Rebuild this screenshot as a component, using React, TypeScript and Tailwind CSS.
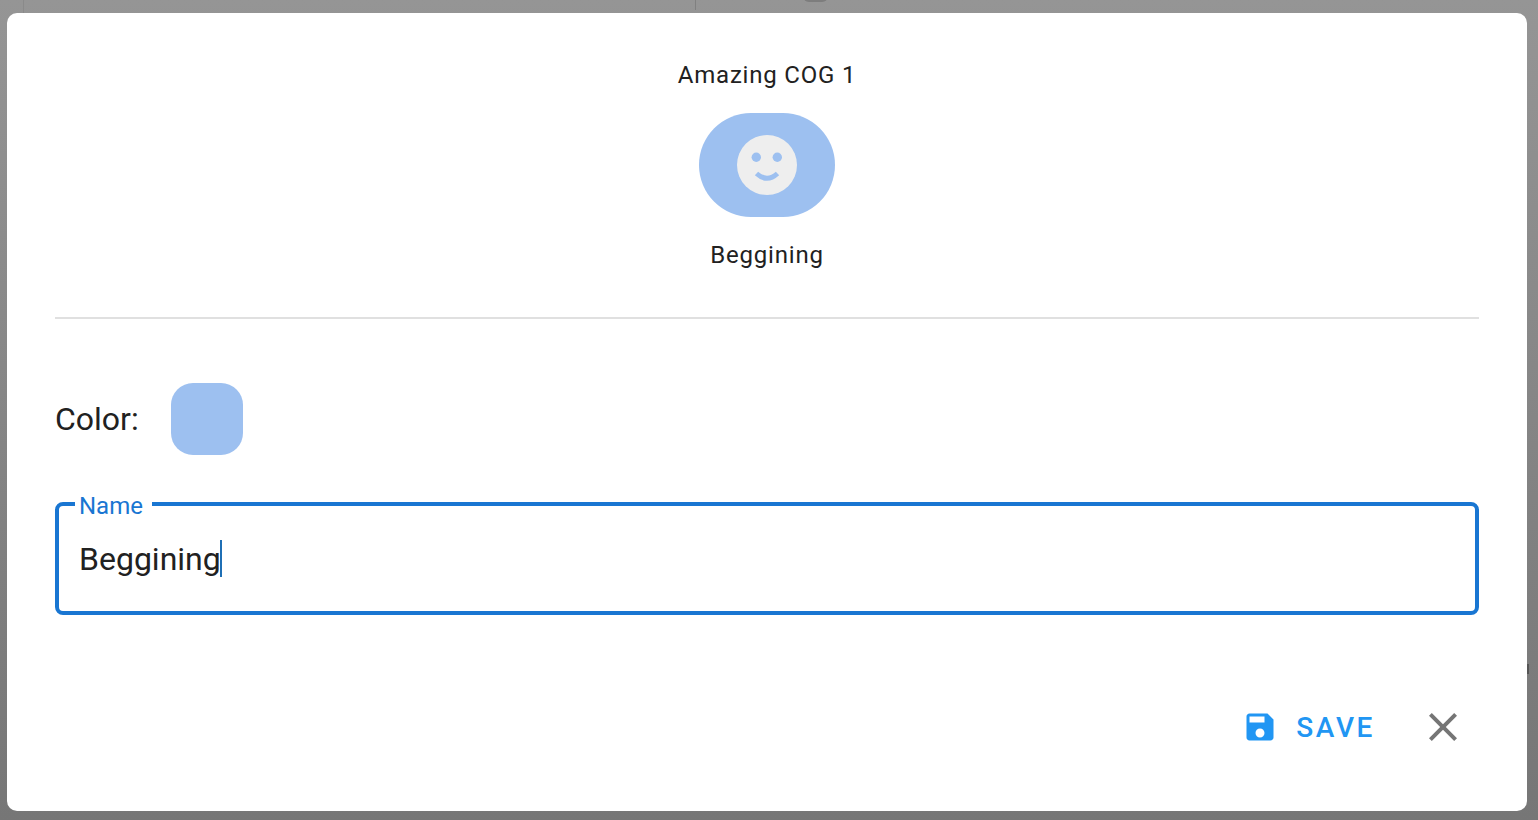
function SaveIcon() {
  return (
    <svg viewBox="0 0 24 24" className="h-[36px] w-[36px] fill-[#2196f3]">
      <path d="M17 3H5c-1.11 0-2 .9-2 2v14c0 1.1.89 2 2 2h14c1.1 0 2-.9 2-2V7l-4-4zm-5 16c-1.66 0-3-1.34-3-3s1.34-3 3-3 3 1.34 3 3-1.34 3-3 3zm3-10H5V5h10v4z" />
    </svg>
  );
}

function CloseIcon() {
  return (
    <svg viewBox="0 0 24 24" className="h-[48px] w-[48px] fill-[#757575]">
      <path d="M19 6.41 17.59 5 12 10.59 6.41 5 5 6.41 10.59 12 5 17.59 6.41 19 12 13.41 17.59 19 19 17.59 13.41 12z" />
    </svg>
  );
}

function Face() {
  return (
    <svg viewBox="0 0 60 60" className="h-[60px] w-[60px]">
      <circle cx="30" cy="30" r="30" fill="#eeeeee" />
      <circle cx="19.3" cy="22.3" r="4.7" fill="#9dc0f0" />
      <circle cx="40.3" cy="22.3" r="4.7" fill="#9dc0f0" />
      <path d="M19.5 38.5Q30 48 40.5 38.5" fill="none" stroke="#9dc0f0" strokeWidth="5" />
    </svg>
  );
}

export default function App() {
  return (
    <div className="relative h-[820px] w-[1538px] overflow-hidden bg-linear-to-b from-[#959595] to-[#767676] pl-[7px] pt-[13px] font-['Roboto',sans-serif] text-[#212121]">
      {/* what shows of the page behind the dialog */}
      <div className="absolute left-[695px] top-0 h-[10px] w-px bg-[#808080]" />
      <div className="absolute left-[23px] top-0 h-[13px] w-px bg-[#8a8a8a]" />
      <div className="absolute left-[803px] top-[-10px] h-[12px] w-[25px] rounded-full bg-[#7d7d7d]" />
      <div className="absolute left-[1527px] top-[664px] h-[10px] w-[2px] bg-[#555555]" />

      <div className="relative flex h-[798px] w-[1520px] flex-col rounded-[10px] bg-white px-12">
        <div className="flex h-[306px] flex-col items-center border-b-2 border-[#e0e0e0] pt-[46px]">
          <div className="text-[24px] leading-[32px] tracking-[0.8px]">Amazing COG 1</div>
          <div className="mt-[22px] flex h-[104px] w-[136px] items-center justify-center rounded-[52px] bg-[#9dc0f0]">
            <Face />
          </div>
          <div className="mt-[22px] text-[24px] leading-[32px] tracking-[0.8px]">Beggining</div>
        </div>

        <div className="mt-[64px] flex items-center gap-8">
          <span className="text-[32px] leading-[40px]">Color:</span>
          <div className="h-[72px] w-[72px] rounded-[22px] bg-[#9dc0f0]" />
        </div>

        <div className="relative mt-[47px] flex h-[113px] items-center rounded-[8px] border-4 border-[#1976d2] px-5">
          <span className="absolute left-[16px] top-[-12px] bg-white pl-[4px] pr-[9px] text-[24px] leading-[24px] text-[#1976d2]">Name</span>
          <span className="text-[32px] leading-[40px]">Beggining</span>
          <span className="-ml-px h-[37px] w-[2px] bg-[#1f6fb5]" />
        </div>

        <div className="mt-[88px] flex items-center justify-end pr-[12px]">
          <SaveIcon />
          <span className="ml-[18px] mt-[2px] text-[28px] leading-[32px] font-medium tracking-[2.6px] text-[#2196f3]">SAVE</span>
          <div className="ml-[44px]">
            <CloseIcon />
          </div>
        </div>
      </div>
    </div>
  );
}
